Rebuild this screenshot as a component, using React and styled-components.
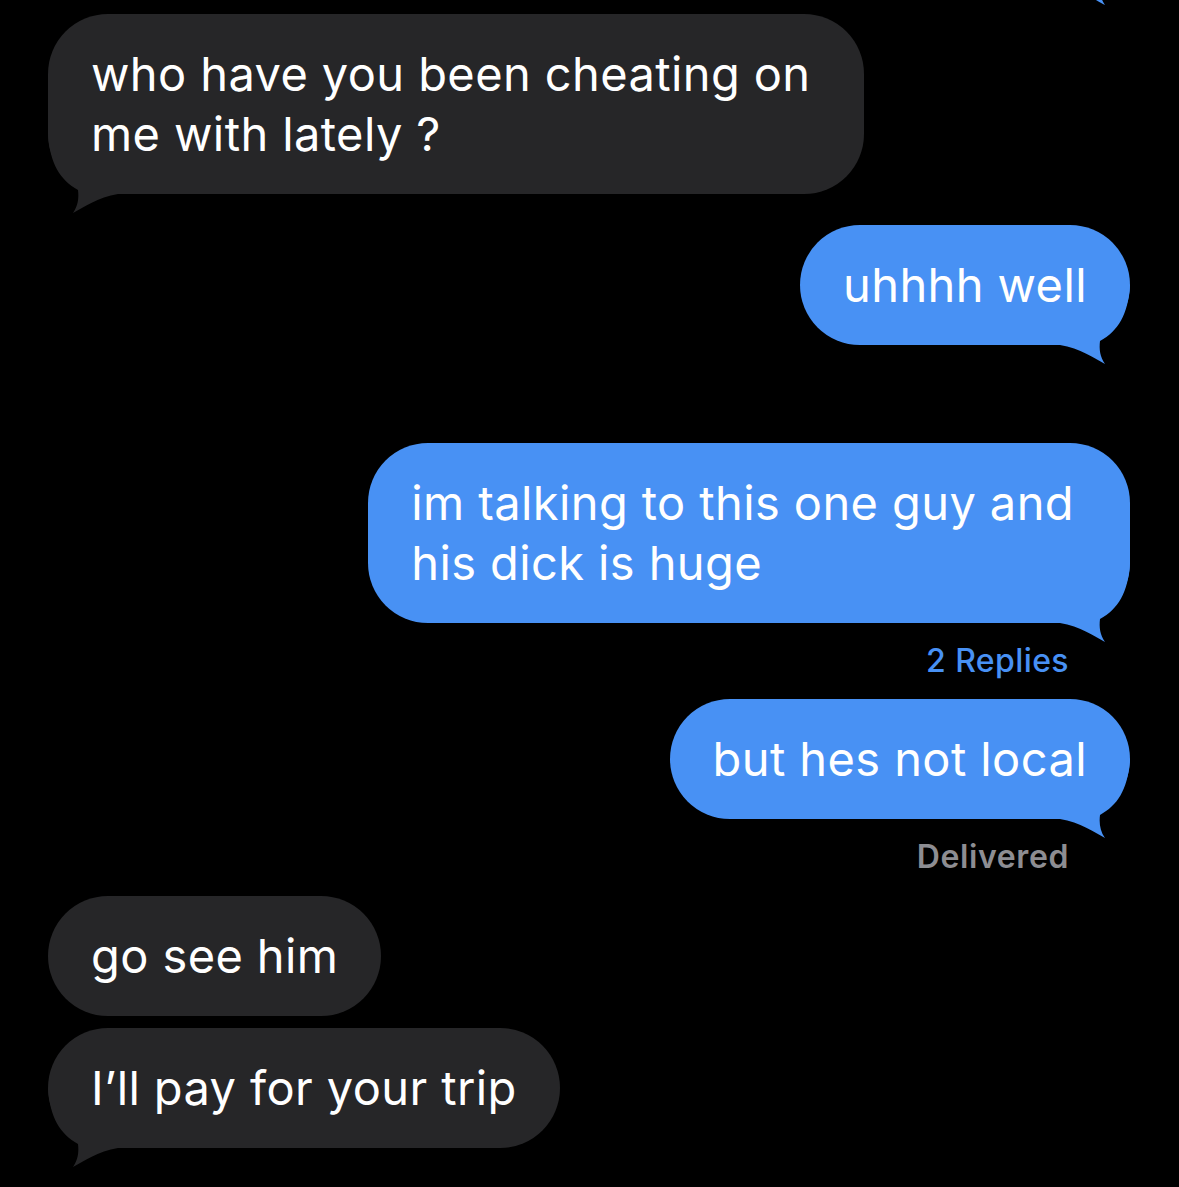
import React from 'react';
import styled, { createGlobalStyle } from 'styled-components';

const GlobalStyle = createGlobalStyle`
  html, body {
    margin: 0;
    padding: 0;
    background: #000;
  }
  body {
    width: 1179px;
    height: 1187px;
    overflow: hidden;
    font-family: Inter, "Noto Sans", "Liberation Sans", sans-serif;
  }
`;

const GRAY = '#262628';
const BLUE = '#4891f4';

const Thread = styled.div`
  display: flex;
  flex-direction: column;
  padding: 14px 49px 0 48px;
`;

const Row = styled.div`
  display: flex;
  justify-content: ${(p) => (p.$sent ? 'flex-end' : 'flex-start')};
  margin-top: ${(p) => p.$gap || 0}px;
`;

const Bubble = styled.div`
  position: relative;
  isolation: isolate;
  box-sizing: border-box;
  padding: 30px ${(p) => 43 + (p.$extra || 0)}px 30px 43px;
  min-height: 120px;
  border-radius: 60px;
  background: ${(p) => (p.$sent ? BLUE : GRAY)};
  color: #fff;
  font-size: 47px;
  line-height: 60px;
  letter-spacing: 0.4px;
  white-space: nowrap;
`;

const TailSvg = styled.svg`
  position: absolute;
  z-index: -1;
  bottom: -20px;
  ${(p) => (p.$sent ? 'right: 0;' : 'left: 0;')}
  width: 72px;
  height: 80px;
  transform: ${(p) => (p.$sent ? 'scaleX(-1)' : 'none')};
`;

const Meta = styled.div`
  display: flex;
  justify-content: flex-end;
  padding-right: 61px;
  font-size: 32px;
  line-height: 38px;
  letter-spacing: ${(p) => (p.$blue ? '0.4px' : '0.6px')};
  font-weight: ${(p) => (p.$blue ? 500 : 600)};
  color: ${(p) => (p.$blue ? BLUE : '#8d8d92')};
  margin-top: ${(p) => p.$gap || 0}px;
`;

const Ghost = styled(Bubble)`
  width: 260px;
`;

function Tail({ sent }) {
  return (
    <TailSvg $sent={sent} viewBox="0 -60 72 80">
      <path
        d="M0 -60 C2 -30 12 -14 30 -4 C31 4 30 12 25 19 C35 14 50 3 70 0 L70 -60 Z"
        fill={sent ? BLUE : GRAY}
      />
    </TailSvg>
  );
}

function Message({ sent, tail, gap, extra, children }) {
  return (
    <Row $sent={sent} $gap={gap}>
      <Bubble $sent={sent} $extra={extra}>
        {tail && <Tail sent={sent} />}
        {children}
      </Bubble>
    </Row>
  );
}

export default function App() {
  return (
    <>
      <GlobalStyle />
      <Thread>
        <Row $sent $gap={-148}>
          <Ghost $sent>
            <Tail sent />
            &nbsp;
          </Ghost>
        </Row>
        <Message tail gap={28} extra={10}>
          who have you been cheating on
          <br />
          me with lately ?
        </Message>
        <Message sent tail gap={31}>uhhhh well</Message>
        <Message sent tail gap={98} extra={13}>
          im talking to this one guy and
          <br />
          his dick is huge
        </Message>
        <Meta $blue $gap={19}>2 Replies</Meta>
        <Message sent tail gap={19}>but hes not local</Message>
        <Meta $gap={19}>Delivered</Meta>
        <Message gap={20}>go see him</Message>
        <Message tail gap={12}>I’ll pay for your trip</Message>
      </Thread>
    </>
  );
}
